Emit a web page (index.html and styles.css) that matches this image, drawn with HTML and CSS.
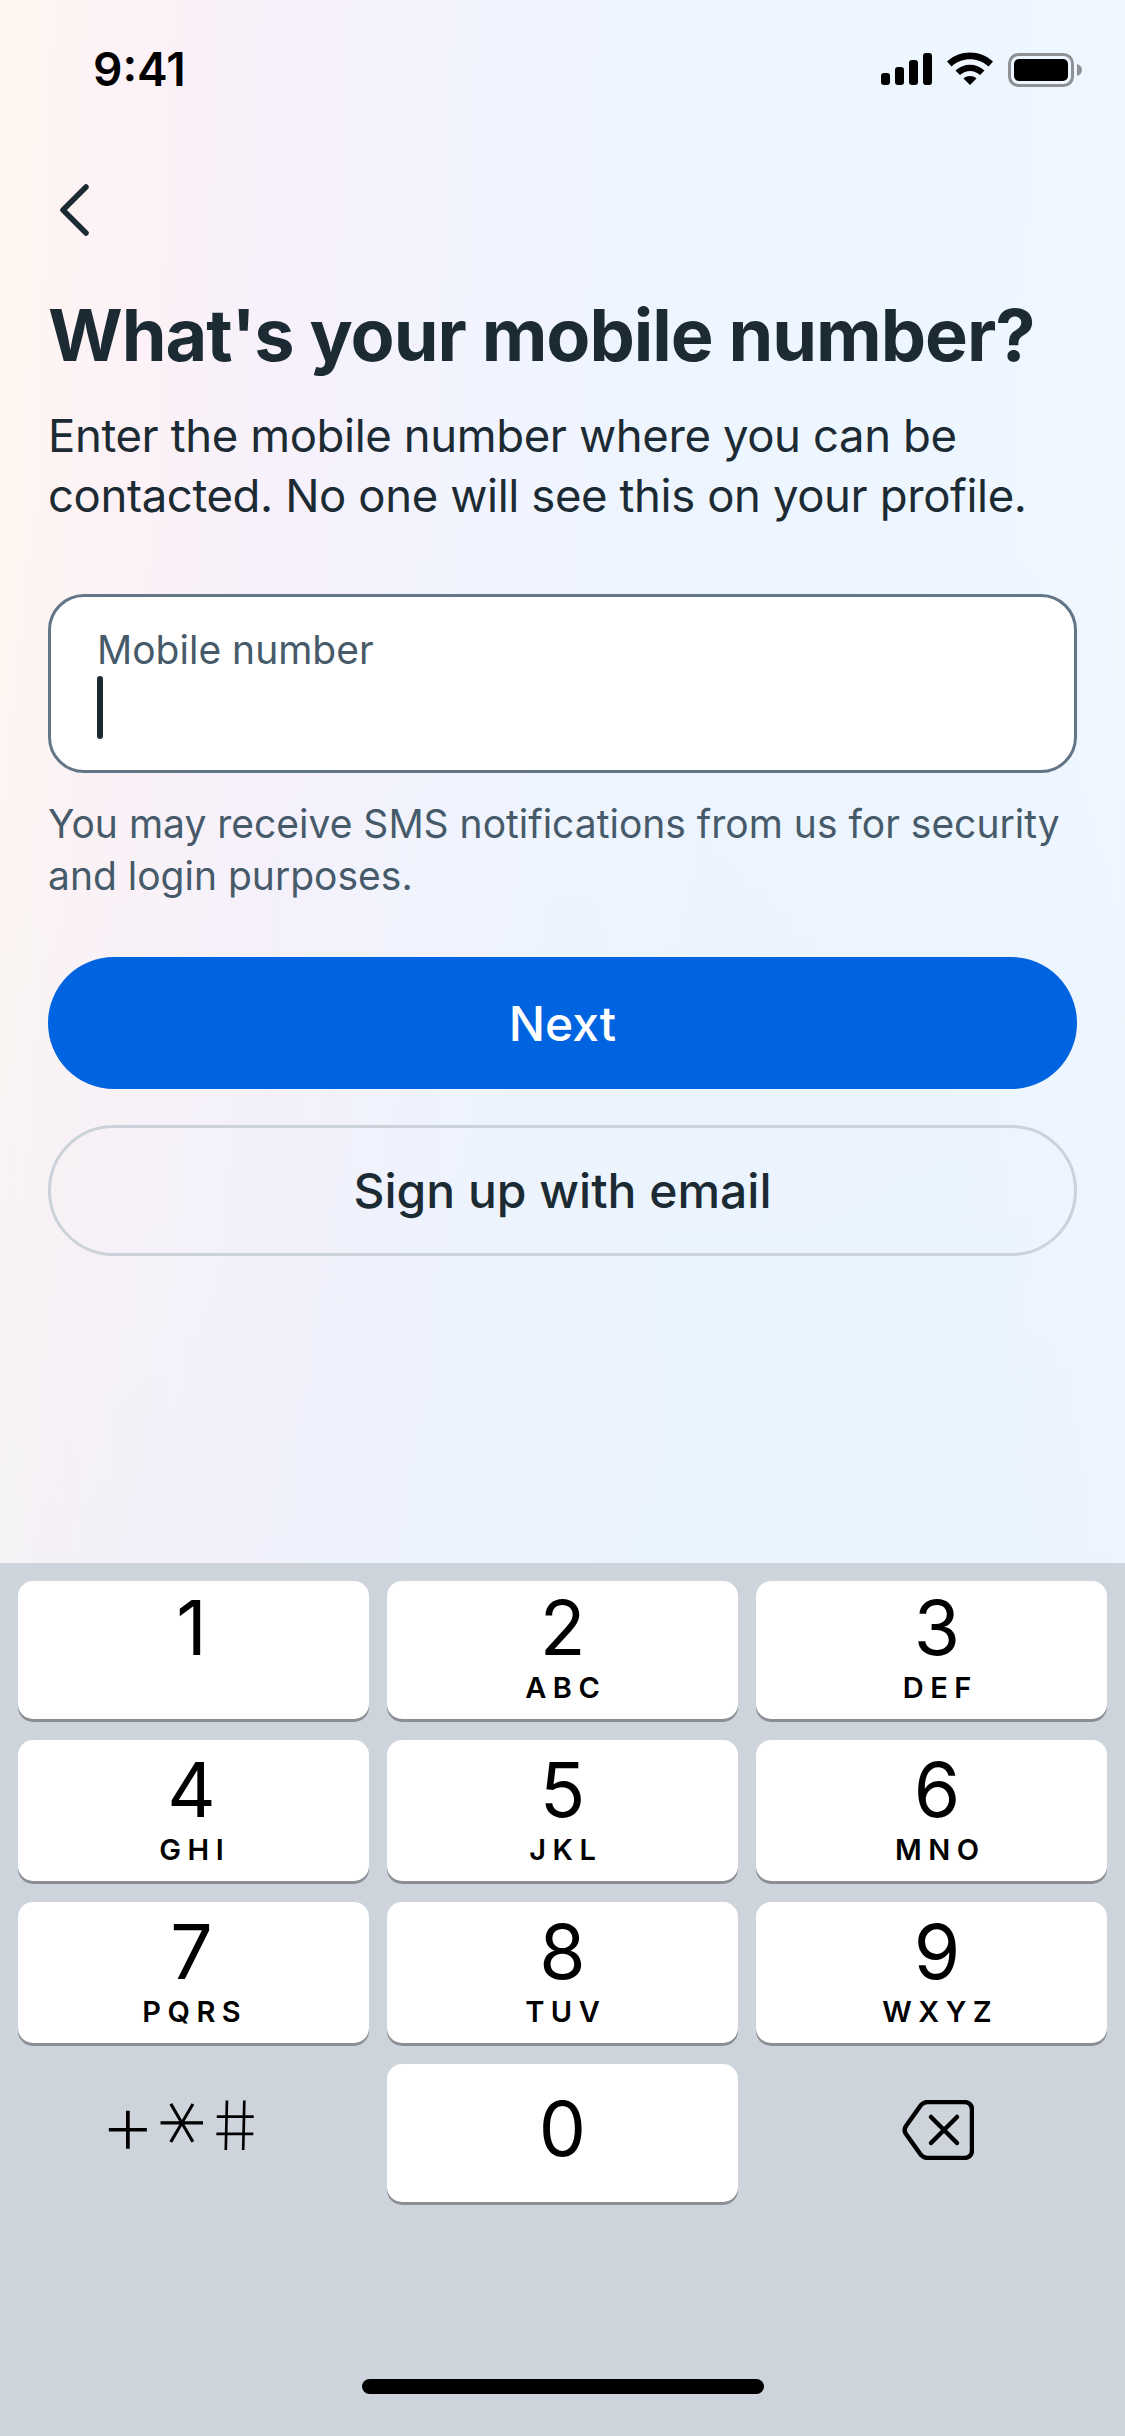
FILE: index.html
```html
<!DOCTYPE html>
<html lang="en">
<head>
    <meta charset="UTF-8">
    <meta name="viewport" content="width=device-width, initial-scale=1.0">
    <title>Mobile number</title>
    <link rel="stylesheet" href="styles.css">
</head>
<body>
    <div class="phone">
        <div class="screen">
            <div class="status-bar">
                <span class="time">9:41</span>
                <div class="status-icons">
                    <svg class="signal" width="51" height="32" viewBox="0 0 51 32">
                        <rect x="0" y="20" width="9" height="12" rx="3"/>
                        <rect x="14" y="14" width="9" height="18" rx="3"/>
                        <rect x="28" y="7" width="9" height="25" rx="3"/>
                        <rect x="42" y="0" width="9" height="32" rx="3"/>
                    </svg>
                    <svg class="wifi" width="46" height="33" viewBox="0 0 46 33">
                        <path d="M0 9.500C13-2.500 33-2.500 46 9.500L41.500 14.500C30.500 4.800 15.500 4.800 4.500 14.500Z"/>
                        <path d="M8.500 18.500C17 10.800 29 10.800 37.500 18.500L33 23C26.500 17.500 19.500 17.500 13 23Z"/>
                        <path d="M16.500 26.500C20.500 23.300 25.500 23.300 29.500 26.500L23 33Z"/>
                    </svg>
                    <svg class="battery" width="74" height="34" viewBox="0 0 74 34">
                        <rect x="1.500" y="1.500" width="63" height="31" rx="9" fill="none" stroke="#8e9297" stroke-width="3"/>
                        <rect x="6" y="6" width="54" height="22" rx="5"/>
                        <path d="M69 11C72 12 74 14 74 17C74 20 72 22 69 23Z" fill="#8e9297"/>
                    </svg>
                </div>
            </div>

            <div class="content">
                <svg class="back" width="34" height="52" viewBox="0 0 34 52">
                    <path d="M30 3L7 26L30 49"/>
                </svg>
                <h1>What's your mobile number?</h1>
                <p class="intro">Enter the mobile number where you can be contacted. No one will see this on your profile.</p>

                <div class="field">
                    <span class="field-label">Mobile number</span>
                    <span class="caret"></span>
                </div>
                <p class="hint">You may receive SMS notifications from us for security and login purposes.</p>

                <button class="btn btn-primary">Next</button>
                <button class="btn btn-outline">Sign up with email</button>
            </div>
        </div>

        <div class="keyboard">
            <div class="keys">
                <div class="key key-top col-left"><span class="digit">1</span></div>
                <div class="key key-top"><span class="digit">2</span><span class="letters">ABC</span></div>
                <div class="key key-top col-right"><span class="digit">3</span><span class="letters">DEF</span></div>
                <div class="key col-left"><span class="digit">4</span><span class="letters">GHI</span></div>
                <div class="key"><span class="digit">5</span><span class="letters">JKL</span></div>
                <div class="key col-right"><span class="digit">6</span><span class="letters">MNO</span></div>
                <div class="key col-left"><span class="digit">7</span><span class="letters">PQRS</span></div>
                <div class="key"><span class="digit">8</span><span class="letters">TUV</span></div>
                <div class="key col-right"><span class="digit">9</span><span class="letters">WXYZ</span></div>
                <div class="key-plain symbols"><span class="sym-plus">+</span><span class="sym-star">*</span><span class="sym-hash">#</span></div>
                <div class="key key-zero"><span class="digit">0</span></div>
                <div class="key-plain delete-key">
                    <svg class="delete" width="72" height="60" viewBox="0 0 72 60">
                        <path d="M26 2H62C67 2 70 5 70 10V50C70 55 67 58 62 58H26C23 58 21 57 19 55L4 34C2 31 2 29 4 26L19 5C21 3 23 2 26 2Z"/>
                        <path d="M29 17L55 43M55 17L29 43"/>
                    </svg>
                </div>
            </div>
            <div class="home-bar"></div>
        </div>
    </div>
</body>
</html>
```

FILE: styles.css
```css
* {
    box-sizing: border-box;
}
body {
    margin: 0;
    font-family: Inter, "Noto Sans", sans-serif;
    color: #1c2b33;
}
.phone {
    width: 1125px;
    height: 2436px;
    display: flex;
    flex-direction: column;
    overflow: hidden;
}
.screen {
    flex: 1;
    display: flex;
    flex-direction: column;
    background:
        linear-gradient(to bottom, rgba(226, 240, 250, 0) 35%, rgba(226, 240, 250, 0.32) 100%),
        linear-gradient(92deg, #fff7f0 0, #fdf2f5 9%, #f7f1fc 26%, #f1f4fe 42%, #edf5ff 62%, #eef6ff 88%, #f1f7ff 100%);
}

/* status bar */
.status-bar {
    height: 139px;
    flex: none;
    display: flex;
    justify-content: space-between;
    align-items: flex-start;
    padding: 45px 43px 0 93px;
}
.time {
    font-size: 46px;
    line-height: 48px;
    font-weight: 600;
    color: #000;
}
.status-icons {
    display: flex;
    align-items: flex-end;
    gap: 15px;
    padding-top: 7px;
}
.signal, .wifi, .battery {
    display: block;
    fill: #000;
}
.battery {
    margin-bottom: -2px;
}

/* form */
.content {
    flex: 1;
    padding: 45px 48px 0 48px;
    display: flex;
    flex-direction: column;
    align-items: flex-start;
}
.back {
    display: block;
    margin-left: 8px;
    fill: none;
    stroke: #1c2b33;
    stroke-width: 5.500;
    stroke-linecap: round;
    stroke-linejoin: round;
}
h1 {
    margin: 57px 0 0;
    font-size: 72px;
    line-height: 84px;
    font-weight: 700;
    letter-spacing: -1.05px;
    white-space: nowrap;
}
.intro {
    margin: 29px 0 0;
    font-size: 45.500px;
    line-height: 60px;
    letter-spacing: -0.4px;
    width: 1029px;
}
.field {
    width: 1029px;
    height: 179px;
    margin-top: 68px;
    padding: 30px 46px 0;
    background: #fff;
    border: 3px solid #637687;
    border-radius: 36px;
    display: flex;
    flex-direction: column;
    align-items: flex-start;
}
.field-label {
    font-size: 39px;
    line-height: 46px;
    color: #465a69;
}
.caret {
    width: 6px;
    height: 63px;
    margin-top: 3px;
    border-radius: 3px;
    background: #1c2b33;
}
.hint {
    margin: 25px 0 0;
    font-size: 39px;
    line-height: 52px;
    color: #465a69;
    width: 1029px;
}
.btn {
    width: 1029px;
    border-radius: 66px;
    font-family: inherit;
    font-size: 48px;
    font-weight: 500;
    padding: 0;
}
.btn-primary {
    height: 132px;
    margin-top: 55px;
    background: #0064e0;
    color: #fff;
    border: none;
}
.btn-outline {
    height: 131px;
    margin-top: 36px;
    background: transparent;
    color: #1c2b33;
    border: 3px solid #cbd2d9;
}

/* number pad */
.keyboard {
    height: 873px;
    flex: none;
    background: #ced4dc;
    padding: 18px 18px 0;
    display: flex;
    flex-direction: column;
    align-items: center;
}
.keys {
    width: 100%;
    display: grid;
    grid-template-columns: repeat(3, 1fr);
    grid-template-rows: 138px 141px 141px 138px;
    gap: 21px 18px;
}
.key {
    background: #fff;
    border-radius: 15px;
    box-shadow: 0 3px 0 #8b8f94;
    display: flex;
    flex-direction: column;
    align-items: center;
    padding-top: 14px;
    color: #000;
}
.key-top {
    padding-top: 11px;
}
.key-zero {
    padding-top: 29px;
}
.col-left {
    padding-right: 4px;
}
.col-right {
    padding-left: 11px;
}
.digit {
    font-size: 75px;
    line-height: 72px;
    font-weight: 375;
}
.letters {
    font-size: 29px;
    line-height: 36px;
    font-weight: 600;
    letter-spacing: 6.500px;
    margin-right: -6.500px;
    margin-top: 6px;
}
.key-plain {
    display: flex;
    justify-content: center;
    align-items: flex-start;
    padding-top: 36px;
    color: #000;
}
.delete-key {
    padding-left: 12px;
}
.symbols {
    padding-top: 0;
    padding-right: 28px;
}
.symbols span {
    display: block;
    font-weight: 200;
    line-height: 118px;
    text-align: center;
}
.sym-plus {
    width: 55px;
    font-size: 88px;
}
.sym-star {
    width: 55px;
    font-family: "DejaVu Sans", sans-serif;
    font-size: 90px;
    -webkit-text-stroke: 1px #000;
    transform-origin: 50% 42px;
    transform: translateY(17px) rotate(90deg);
}
.sym-hash {
    width: 50px;
    font-size: 68px;
    transform: translateY(2px) skewX(8deg);
}
.delete {
    display: block;
    fill: none;
    stroke: #000;
    stroke-width: 4.500;
    stroke-linecap: round;
    stroke-linejoin: round;
}
.home-bar {
    width: 402px;
    height: 15px;
    margin-top: 177px;
    border-radius: 8px;
    background: #000;
}
```
